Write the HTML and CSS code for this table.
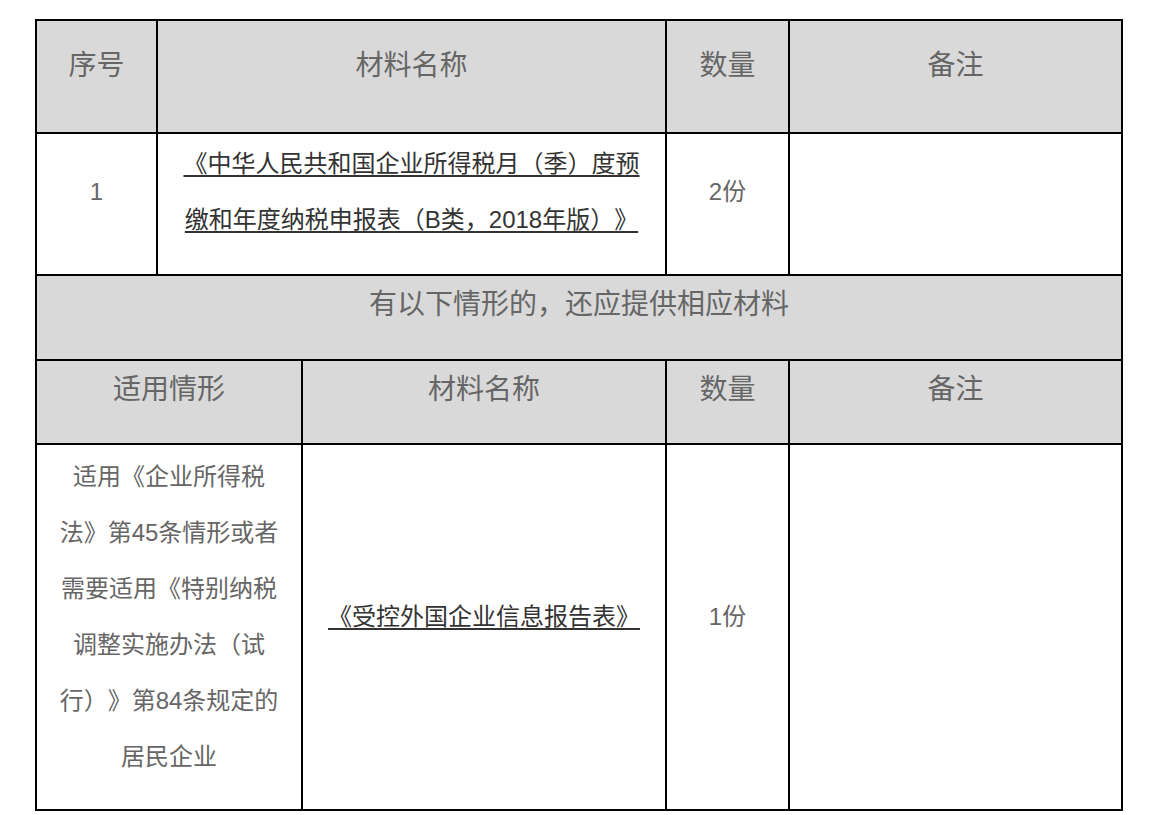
FILE: index.html
```html
<!DOCTYPE html>
<html lang="zh-CN">
<head>
<meta charset="utf-8">
<title>材料清单</title>
<link rel="stylesheet" href="styles.css">
</head>
<body>
<div class="sheet">
  <div class="cell head">序号</div>
  <div class="cell head span2">材料名称</div>
  <div class="cell head">数量</div>
  <div class="cell head">备注</div>

  <div class="cell">1</div>
  <div class="cell span2"><p class="txt"><span class="doc">《中华人民共和国企业所得税月（季）度预<br>缴和年度纳税申报表（B类，2018年版）》</span></p></div>
  <div class="cell">2份</div>
  <div class="cell"></div>

  <div class="cell head span5 wide">有以下情形的，还应提供相应材料</div>

  <div class="cell head span2 sub">适用情形</div>
  <div class="cell head sub">材料名称</div>
  <div class="cell head sub">数量</div>
  <div class="cell head sub">备注</div>

  <div class="cell span2 tall"><p class="txt">适用《企业所得税<br>法》第45条情形或者<br>需要适用《特别纳税<br>调整实施办法（试<br>行）》第84条规定的<br>居民企业</p></div>
  <div class="cell tall"><p class="txt"><span class="doc">《受控外国企业信息报告表》</span></p></div>
  <div class="cell tall">1份</div>
  <div class="cell tall"></div>
</div>
</body>
</html>
```
FILE: styles.css
```css
html, body {
  margin: 0;
  padding: 0;
  background: #ffffff;
}

body {
  font-family: "Liberation Sans Narrow", "Liberation Sans", "Noto Sans CJK SC", sans-serif;
  text-spacing-trim: space-all;
  font-feature-settings: "halt" 0, "chws" 0;
}

.sheet {
  box-sizing: border-box;
  width: 1088px;
  margin: 19px 0 0 35px;
  padding: 2px;
  background: #000000;
  display: grid;
  gap: 2px;
  grid-template-columns: 119px 143px 362px 121px 331px;
  grid-template-rows: 111px 140px 83px 82px 364px;
}

.cell {
  background: #ffffff;
  color: #666666;
  font-size: 24px;
  line-height: 56px;
  display: flex;
  flex-direction: column;
  justify-content: center;
  align-items: center;
  text-align: center;
  padding: 0 0 24px 0;
  box-sizing: border-box;
}

.head {
  background: #d9d9d9;
  font-size: 28px;
  padding-bottom: 22px;
}

.wide {
  padding-bottom: 25px;
}

.sub {
  padding-bottom: 24px;
}

.tall {
  padding-bottom: 20px;
}

.span2 {
  grid-column: span 2;
}

.span5 {
  grid-column: span 5;
}

.txt {
  margin: 0;
}

.doc {
  color: #333333;
  text-decoration: underline;
  text-decoration-color: #333333;
  text-decoration-thickness: 2px;
  text-underline-offset: 3px;
}
```
